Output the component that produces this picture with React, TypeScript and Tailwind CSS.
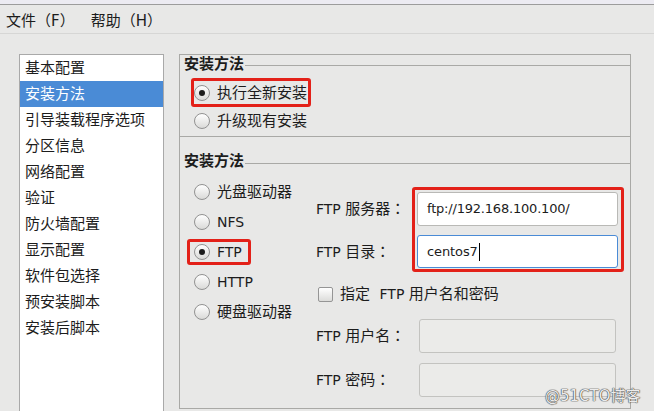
import React from "react";

const FONT = "font-['DejaVu_Sans','Noto_Sans_CJK_SC',sans-serif]";
const COLON = "font-['Noto_Sans_CJK_TC',sans-serif]";

function Radio({ checked }: { checked?: boolean }) {
  return (
    <span className="w-[16px] h-[16px] rounded-full border border-[#929292] bg-linear-to-b from-white to-[#dadad8] flex items-center justify-center shrink-0">
      {checked && <span className="w-[6px] h-[6px] rounded-full bg-[#1c1c1c]" />}
    </span>
  );
}

function RadioRow({ label, checked, latin, h }: { label: string; checked?: boolean; latin?: boolean; h: string }) {
  return (
    <div className={`${h} flex items-center pl-[14px] gap-[7px]`}>
      <Radio checked={checked} />
      <span className={latin ? "text-[14px]" : "text-[15px]"}>{label}</span>
    </div>
  );
}

function SectionHeader({ lineTop }: { lineTop: string }) {
  return (
    <div className="flex items-start h-[18px]">
      <span className="pl-[4px] pr-[1px] font-bold leading-[18px] text-[15px]">安装方法</span>
      <div className={`flex-1 h-px bg-[#a9a9a6] ${lineTop}`} />
    </div>
  );
}

function Label({ text, w }: { text: string; w: string }) {
  return (
    <span className={`${w} text-[15px] whitespace-pre`}>
      <span className="text-[14px]">FTP </span>
      {text}
      <span className={COLON}>：</span>
    </span>
  );
}

export default function App() {
  const items = [
    "基本配置",
    "安装方法",
    "引导装载程序选项",
    "分区信息",
    "网络配置",
    "验证",
    "防火墙配置",
    "显示配置",
    "软件包选择",
    "预安装脚本",
    "安装后脚本",
  ];
  return (
    <div className={`${FONT} w-[654px] h-[411px] overflow-hidden bg-[#e8e8e7] relative text-[#1c1c1c] flex flex-col`}>
      <div className="h-[4px] bg-[#ecebf2] shrink-0" />
      <div className="h-px bg-[#9c9c9c] shrink-0" />
      <div className="h-[28px] flex items-center pt-[4px] pl-[6px] gap-[16px] text-[15px] shrink-0">
        <span>文件（F）</span>
        <span>帮助（H）</span>
      </div>
      <div className="h-px bg-[#d6d6d5] shrink-0" />
      <div className="flex pt-[20px] pl-[19px] shrink-0">
        <div className="w-[145px] h-[400px] border border-[#a9a9a9] bg-white shrink-0">
          {items.map((it, i) => (
            <div
              key={it}
              className={`h-[26px] leading-[26px] pl-[5px] text-[15px] ${i === 1 ? "bg-[#4a8bd6] text-white" : ""}`}
            >
              {it}
            </div>
          ))}
        </div>
        <div className="ml-[15px] w-[452px] h-[355px] border border-[#a9a9a6] shrink-0 flex flex-col">
          <SectionHeader lineTop="mt-[10px]" />
          <div className="border-b border-[#a9a9a6] pt-[6px] pb-[1px]">
            <RadioRow h="h-[28px]" label="执行全新安装" checked />
            <RadioRow h="h-[28px]" label="升级现有安装" />
          </div>
          <div className="mt-[15px]">
            <SectionHeader lineTop="mt-[11px]" />
          </div>
          <div className="flex">
            <div className="w-[135px] pt-[7px] shrink-0">
              <RadioRow h="h-[30px]" label="光盘驱动器" />
              <RadioRow h="h-[30px]" label="NFS" latin />
              <RadioRow h="h-[30px]" label="FTP" latin checked />
              <RadioRow h="h-[30px]" label="HTTP" latin />
              <RadioRow h="h-[30px]" label="硬盘驱动器" />
            </div>
            <div className="flex flex-col pt-[22px] pl-[1px]">
              <div className="flex items-center h-[34px]">
                <Label w="w-[101px]" text="服务器" />
                <div className="w-[201px] h-[34px] rounded-[3px] border border-[#b9b9b6] bg-white flex items-center pl-[9px] text-[13px] tracking-[-0.2px]">
                  ftp://192.168.100.100/
                </div>
              </div>
              <div className="flex items-center h-[33px] mt-[9px]">
                <Label w="w-[101px]" text="目录" />
                <div className="w-[201px] h-[33px] rounded-[3px] border border-[#4a8bd6] bg-white flex items-center pl-[9px] text-[13px] tracking-[-0.1px]">
                  centos7
                  <span className="w-px h-[18px] bg-black ml-[1px]" />
                </div>
              </div>
              <div className="flex items-center h-[26px] mt-[13px] pl-[2px] gap-[7px]">
                <span className="w-[15px] h-[15px] rounded-[2px] border border-[#959595] bg-linear-to-b from-white to-[#dcdcda] shrink-0" />
                <span className="text-[15px] whitespace-pre">
                  指定  <span className="text-[14px]">FTP </span>用户名和密码
                </span>
              </div>
              <div className="flex items-center h-[34px] mt-[12px]">
                <Label w="w-[103px]" text="用户名" />
                <div className="w-[197px] h-[34px] rounded-[3px] border border-[#c3c3c0] bg-[#ebebe9]" />
              </div>
              <div className="flex items-center h-[34px] mt-[10px]">
                <Label w="w-[103px]" text="密码" />
                <div className="w-[197px] h-[34px] rounded-[3px] border border-[#c3c3c0] bg-[#ebebe9]" />
              </div>
            </div>
          </div>
        </div>
      </div>

      {/* annotation boxes */}
      <div className="absolute left-[191px] top-[78px] w-[120px] h-[29px] border-[3px] border-[#e32119] rounded-[3px]" />
      <div className="absolute left-[187px] top-[239px] w-[64px] h-[26px] border-[3px] border-[#e32119] rounded-[3px]" />
      <div className="absolute left-[412px] top-[187px] w-[212px] h-[85px] border-[3px] border-[#e32119] rounded-[3px]" />

      <div className="absolute left-[545px] top-[385px] text-[15px] text-[#ececec] [text-shadow:0_0_1px_#444,0_0_1px_#444,0_0_1px_#444]">
        @51CTO博客
      </div>
    </div>
  );
}
